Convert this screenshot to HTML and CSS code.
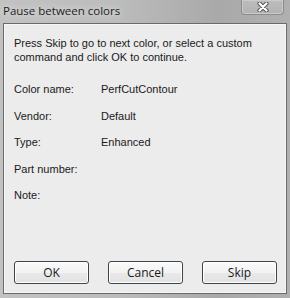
FILE: index.html
```html
<!DOCTYPE html>
<html lang="en">
<head>
    <meta charset="UTF-8">
    <title>Pause between colors</title>
    <link rel="stylesheet" href="styles.css">
</head>
<body>

<div class="window">
    <div class="title-bar">
        <span class="title">Pause between colors</span>
        <div class="close-btn">
            <svg width="12" height="10" viewBox="0 0 12 10">
                <path d="M2.5 1.5 L9.5 8.5 M9.5 1.5 L2.5 8.5" stroke="#555555" stroke-width="4.2" stroke-linecap="round"/>
                <path d="M2.5 1.5 L9.5 8.5 M9.5 1.5 L2.5 8.5" stroke="#ffffff" stroke-width="2.2" stroke-linecap="round"/>
            </svg>
        </div>
    </div>

    <div class="panel">
        <p class="message">Press Skip to go to next color, or select a custom command and click OK to continue.</p>

        <div class="details">
            <div class="row"><span class="label">Color name:</span><span class="value">PerfCutContour</span></div>
            <div class="row"><span class="label">Vendor:</span><span class="value">Default</span></div>
            <div class="row"><span class="label">Type:</span><span class="value">Enhanced</span></div>
            <div class="row"><span class="label">Part number:</span><span class="value"></span></div>
            <div class="row"><span class="label">Note:</span><span class="value"></span></div>
        </div>

        <div class="buttons">
            <button>OK</button>
            <button>Cancel</button>
            <button>Skip</button>
        </div>
    </div>
</div>

</body>
</html>
```

FILE: styles.css
```css
body {
    margin: 0;
    width: 290px;
    height: 298px;
    overflow: hidden;
    font-family: 'Liberation Sans', Arial, sans-serif;
}

.window {
    width: 290px;
    height: 298px;
    box-sizing: border-box;
    padding: 0 3px 4px 3px;
    display: flex;
    flex-direction: column;
    background: linear-gradient(90deg, #c2c2c2 0%, #bcbcbc 40%, #a9a9a9 75%, #b0b0b0 100%);
}

.title-bar {
    height: 23px;
    display: flex;
    justify-content: space-between;
    align-items: flex-start;
}

.title {
    font-family: 'Open Sans', 'Noto Sans', sans-serif;
    font-size: 11.5px;
    color: #1c1c1c;
    line-height: 14px;
    padding-top: 4px;
    text-shadow: 0 0 8px #e2e2e2, 0 0 4px #dadada;
}

.close-btn {
    width: 43px;
    height: 15px;
    margin-right: 3px;
    box-sizing: border-box;
    border: 1px solid #8c8c8c;
    border-top: none;
    border-radius: 0 0 4px 4px;
    background: linear-gradient(#bdbdbd, #b2b2b2);
    box-shadow: inset 0 0 0 1px #cacaca;
    display: flex;
    align-items: center;
    justify-content: center;
}

.panel {
    flex: 1;
    background-color: #ececec;
    border: 1px solid #6a6a6a;
    box-shadow: inset 0 0 0 1px #f6f6f6;
    padding: 12px 9px 9px 10px;
    display: flex;
    flex-direction: column;
    font-size: 11px;
    line-height: 14px;
    color: #1a1a1a;
}

.message {
    margin: 0;
    width: 262px;
}

.details {
    margin-top: 18px;
}

.row {
    display: flex;
    height: 26.5px;
}

.label {
    width: 87px;
}

.buttons {
    margin-top: auto;
    display: flex;
    justify-content: space-between;
}

button {
    width: 75px;
    height: 23px;
    border: 1px solid #3c4650;
    border-radius: 3px;
    background: linear-gradient(#fafafa 0%, #f2f2f2 50%, #e9e9e9 51%, #e2e2e2 100%);
    box-shadow: inset 0 0 0 1px #ffffff;
    font-family: 'Open Sans', 'Noto Sans', sans-serif;
    font-size: 12px;
    color: #1a1a1a;
    padding: 0;
}
```
